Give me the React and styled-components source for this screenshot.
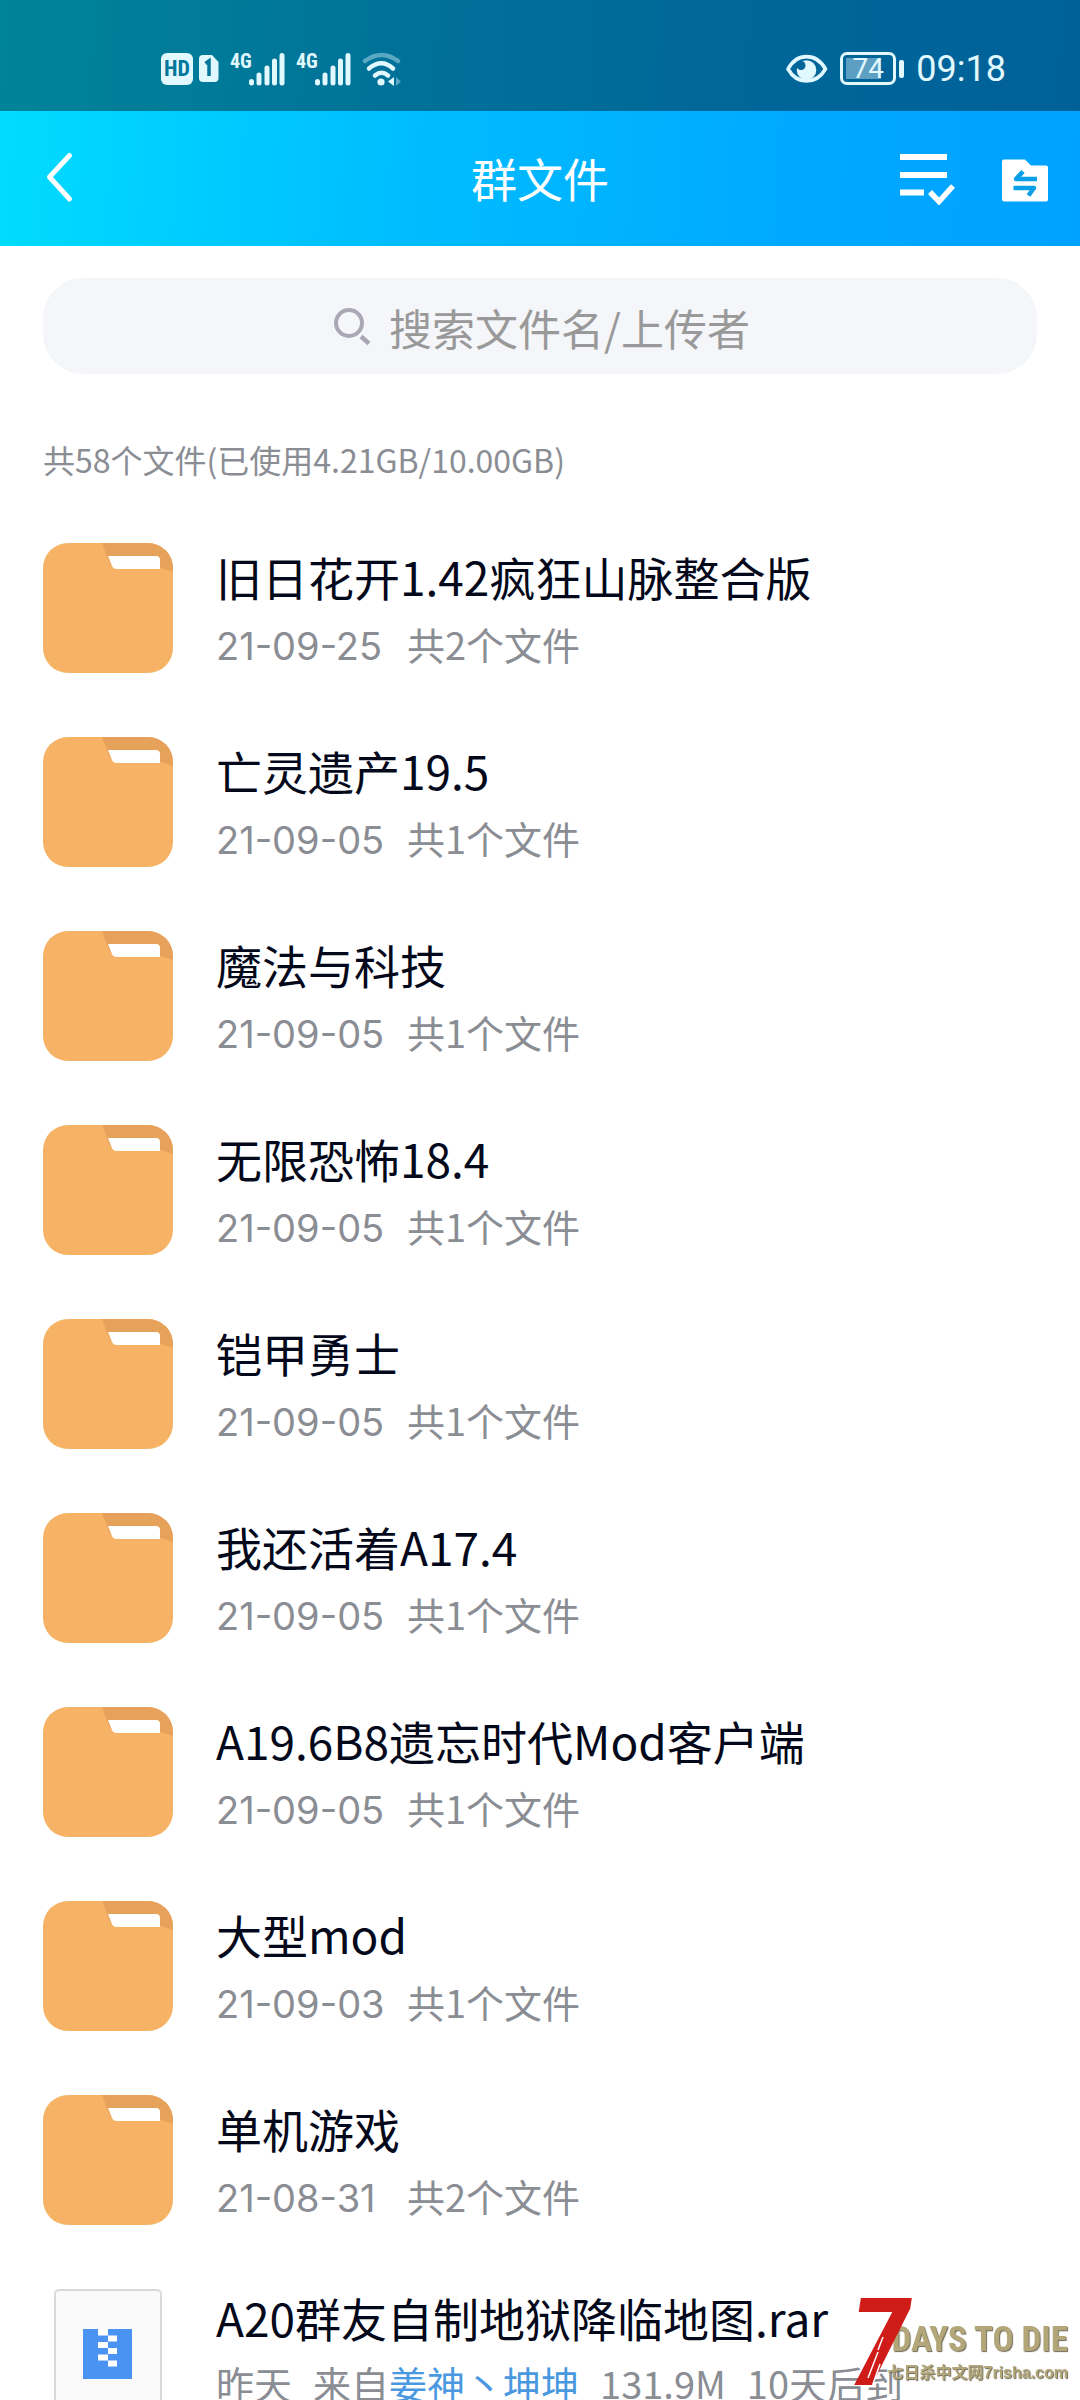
import React from "react";
import styled, { createGlobalStyle } from "styled-components";

const cjk = '"Noto Sans CJK SC", sans-serif';
const condensed = '"Liberation Sans Narrow", "Roboto Condensed", Roboto, sans-serif';

const Global = createGlobalStyle`
  *, *::before, *::after { box-sizing: border-box; }
  body { margin: 0; background: #fff; font-family: ${cjk}; }
  button { border: 0; padding: 0; background: none; color: inherit; font: inherit; cursor: pointer; }
  svg { display: block; }
  a { color: inherit; text-decoration: none; }
`;

const Screen = styled.div`
  display: flex;
  flex-direction: column;
  height: 100vh;
  overflow: hidden;
  background: #fff;
`;

const Top = styled.header`
  flex: none;
  color: #fff;
  background: linear-gradient(94deg, #00dcff 0%, #00beff 36%, #00a8ff 75%, #00a2ff 100%);
`;

const StatusBar = styled.div`
  display: flex;
  align-items: center;
  justify-content: space-between;
  height: 111px;
  padding: 26px 74px 0 161px;
  background: rgba(0, 0, 0, 0.4);
  color: #e2f8ff;
`;

const StatusGroup = styled.div`
  display: flex;
  align-items: center;
  gap: ${(p) => p.$gap}px;
`;

const Badge = styled.span`
  display: grid;
  place-items: center;
  width: 32px;
  height: 32px;
  border-radius: 6px;
  background: #e2f8ff;
  color: #00769b;
  font: 700 22px/32px ${condensed};
`;

const Signal = styled.span`
  display: flex;
  align-items: flex-start;
  height: 34px;
`;

const Network = styled.span`
  width: 19px;
  font: 700 20px/18px ${condensed};
`;

const Clock = styled.time`
  font: 400 36px/44px Roboto, sans-serif;
`;

const Battery = styled.span`
  display: flex;
  align-items: center;
  gap: 3px;
  &::after {
    content: "";
    width: 5px;
    height: 18px;
    border-radius: 2px;
    background: #e2f8ff;
  }
`;

const BatteryBody = styled.span`
  display: grid;
  width: 56px;
  height: 33px;
  padding: 3px;
  border: 3px solid #e2f8ff;
  border-radius: 7px;
  font: 400 28px/21px Roboto, sans-serif;
  text-align: center;
  background: linear-gradient(#5c9fc2, #5c9fc2) 3px 3px / 35px 21px no-repeat;
`;

const NavBar = styled.div`
  display: grid;
  grid-template-columns: 1fr auto 1fr;
  align-items: center;
  height: 135px;
  padding: 0 32px;
`;

const NavTitle = styled.h1`
  margin: 0;
  padding-bottom: 4px;
  font-size: 46px;
  font-weight: 400;
  line-height: 64px;
`;

const NavActions = styled.div`
  display: flex;
  justify-content: flex-end;
  gap: 44px;
`;

const Main = styled.main`
  flex: 1;
  min-height: 0;
  overflow: hidden;
  padding: 32px 43px 0;
`;

const SearchBox = styled.label`
  display: flex;
  align-items: center;
  justify-content: center;
  gap: 18px;
  height: 96px;
  padding: 2px 0 0 4px;
  border-radius: 40px;
  background: #f4f6fa;
`;

const SearchInput = styled.input`
  field-sizing: content;
  border: 0;
  padding: 0;
  outline: 0;
  background: none;
  color: #333;
  font: 400 43px/64px ${cjk};
  &::placeholder { color: #999; opacity: 1; }
`;

const Summary = styled.p`
  margin: 61px 0 60px;
  color: #8a8d93;
  font-size: 32px;
  line-height: 48px;
`;

const FileList = styled.ul`
  display: flex;
  flex-direction: column;
  gap: 64px;
  margin: 0;
  padding: 0;
  list-style: none;
`;

const Row = styled.li`
  display: flex;
  gap: 43px;
  min-height: 130px;
`;

const IconCell = styled.div`
  flex: none;
  display: flex;
  justify-content: center;
  width: 130px;
`;

const RowText = styled.div`
  display: flex;
  flex-direction: column;
  gap: ${(p) => (p.$file ? 14 : 16)}px;
  min-width: 0;
  padding-top: ${(p) => (p.$file ? 0 : 5)}px;
  white-space: nowrap;
`;

const RowTitle = styled.a`
  color: #03081a;
  font-size: 46px;
  line-height: 56px;
`;

const Meta = styled.div`
  display: flex;
  align-items: baseline;
  gap: 21px;
  color: #8a8d93;
  font-size: 38px;
  line-height: 48px;
`;

const DateText = styled.time`
  min-width: 170px;
  font-family: Inter, ${cjk};
`;

const Uploader = styled.a`
  color: #4a98e0;
`;

const Watermark = styled.aside`
  position: fixed;
  right: 12px;
  bottom: 0;
  display: flex;
  width: 214px;
  height: 112px;
`;

const Seven = styled.span`
  position: absolute;
  left: -5px;
  top: 0;
  color: #cf1c18;
  font: italic 700 122px/112px ${condensed};
`;

const Scratches = styled.svg`
  position: absolute;
  left: 0;
  top: 0;
`;

const MarkText = styled.div`
  flex: 1;
  display: flex;
  flex-direction: column;
  align-items: flex-end;
  padding-top: 29px;
  color: #b3a678;
  text-shadow: 1px 1px 1px #6f6a58;
  white-space: nowrap;
`;

const MarkName = styled.span`
  font: 700 35px/46px ${condensed};
`;

const MarkSite = styled.span`
  font: 700 16px/20px "Liberation Sans", ${cjk};
`;

const SignalBars = () => (
  <svg width="36" height="34" viewBox="0 0 36 34" stroke="currentColor" strokeWidth="5" strokeLinecap="round">
    <path d="M2.5 29.5v1.5M10 23v8M18 16v15M25.500 9v22M33 3.500v27.500" />
  </svg>
);

const Wifi = () => (
  <svg width="40" height="34" viewBox="0 0 40 34" fill="none" stroke="currentColor" strokeWidth="4.500" strokeLinecap="round">
    <path d="M3 9Q19.500-3 36 9" opacity=".4" />
    <path d="M7 16.500Q19.500 6 31 16.500M13 23.500Q19.500 18 26 23.500" />
    <circle cx="19" cy="30" r="3.600" fill="currentColor" stroke="none" />
    <path d="M32 25v9l-6-4.500z" fill="currentColor" stroke="none" />
    <path d="M34 25v9l5-4.500z" fill="currentColor" stroke="none" opacity=".4" />
  </svg>
);

const Sim = () => (
  <svg width="20" height="27" viewBox="0 0 20 27">
    <path d="M4 0h9l6.500 7v16a4 4 0 0 1-4 4H4a4 4 0 0 1-4-4V4a4 4 0 0 1 4-4z" fill="currentColor" />
    <path d="M6.500 8.500l3.500-2.500v15" fill="none" stroke="#00769b" strokeWidth="3.500" />
  </svg>
);

const Eye = () => (
  <svg width="42" height="30" viewBox="0 0 42 30">
    <path d="M2 15C11-1.500 30-1.500 39.500 15C30 31 11 31 2 15z" fill="none" stroke="currentColor" strokeWidth="3.600" strokeLinejoin="round" />
    <circle cx="20.500" cy="16" r="9.800" fill="currentColor" />
    <circle cx="15" cy="11.500" r="4.500" fill="#00659a" />
  </svg>
);

const Back = () => (
  <svg width="48" height="64" viewBox="-8 0 48 64" fill="none" stroke="#fff" strokeWidth="5" strokeLinecap="round" strokeLinejoin="round">
    <path d="M29.500 11.500L9.500 33l20 22" />
  </svg>
);

const SelectIcon = () => (
  <svg width="58" height="52" viewBox="0 0 58 52" fill="none" stroke="#fff" strokeWidth="6" strokeLinejoin="round">
    <path d="M0 4h47M0 22h47M0 39.500h24" />
    <path d="M30 39l9 9.500L53 33" strokeLinejoin="miter" strokeWidth="5.500" />
  </svg>
);

const TransferIcon = () => (
  <svg width="46" height="52" viewBox="0 0 46 52">
    <path d="M2 6.500h21l6 6h15a2 2 0 0 1 2 2v32a2 2 0 0 1-2 2H2a2 2 0 0 1-2-2v-38a2 2 0 0 1 2-2z" fill="#fff" />
    <path d="M35 26H14l7-7.500M11.500 35H32l-5.500 7.500" fill="none" stroke="#0a9fe6" strokeWidth="4.500" strokeLinejoin="round" />
  </svg>
);

const SearchIcon = () => (
  <svg width="37" height="38" viewBox="0 0 37 38" fill="none" stroke="#a9a8b4" strokeWidth="4">
    <circle cx="15" cy="15" r="13" />
    <path d="M27 28.500l8 7" strokeWidth="4.500" />
  </svg>
);

const FolderIcon = () => (
  <svg width="130" height="130" viewBox="0 0 130 130" aria-hidden="true">
    <rect width="130" height="130" rx="25" fill="#f7b365" />
    <path d="M59 0h46a25 25 0 0 1 25 25v4l-12-4H72q-5-3-7-9z" fill="#e6a25b" />
    <path d="M65 13h48q4 0 4 4v9H74q-4 0-5-3z" fill="#fff" />
  </svg>
);

const ArchiveIcon = () => (
  <svg width="108" height="130" viewBox="0 0 108 130" aria-hidden="true">
    <rect x="1" y="1" width="106" height="128" rx="4" fill="#fafafa" stroke="#d9d9d9" strokeWidth="2" />
    <path d="M29 40h49v50H29z" fill="#4a93f2" />
    <path d="M44 40h10v6.500h9v6h-9v6.500h9v6h-9v6.500h9v6h-9v-6h-10v-6h10v-6.500h-10v-6h10v-6.500H44z" fill="#fff" />
  </svg>
);

const folders = [
  ["旧日花开1.42疯狂山脉整合版", "21-09-25", 2],
  ["亡灵遗产19.5", "21-09-05", 1],
  ["魔法与科技", "21-09-05", 1],
  ["无限恐怖18.4", "21-09-05", 1],
  ["铠甲勇士", "21-09-05", 1],
  ["我还活着A17.4", "21-09-05", 1],
  ["A19.6B8遗忘时代Mod客户端", "21-09-05", 1],
  ["大型mod", "21-09-03", 1],
  ["单机游戏", "21-08-31", 2],
];

export default function App() {
  return (
    <Screen>
      <Global />
      <Top>
        <StatusBar>
          <StatusGroup $gap={11}>
            <StatusGroup $gap={6}>
              <Badge>HD</Badge>
              <Sim />
            </StatusGroup>
            <Signal><Network>4G</Network><SignalBars /></Signal>
            <Signal><Network>4G</Network><SignalBars /></Signal>
            <Wifi />
          </StatusGroup>
          <StatusGroup $gap={12}>
            <Eye />
            <Battery><BatteryBody>74</BatteryBody></Battery>
            <Clock>09:18</Clock>
          </StatusGroup>
        </StatusBar>
        <NavBar>
          <div><button type="button" aria-label="返回"><Back /></button></div>
          <NavTitle>群文件</NavTitle>
          <NavActions>
            <button type="button" aria-label="多选"><SelectIcon /></button>
            <button type="button" aria-label="传输列表"><TransferIcon /></button>
          </NavActions>
        </NavBar>
      </Top>
      <Main>
        <SearchBox>
          <SearchIcon />
          <SearchInput type="text" aria-label="搜索" placeholder="搜索文件名/上传者" />
        </SearchBox>
        <Summary>共58个文件(已使用4.21GB/10.00GB)</Summary>
        <FileList>
          {folders.map(([name, date, count]) => (
            <Row key={name}>
              <IconCell><FolderIcon /></IconCell>
              <RowText>
                <RowTitle href="#folder">{name}</RowTitle>
                <Meta>
                  <DateText>{date}</DateText>
                  <span>共{count}个文件</span>
                </Meta>
              </RowText>
            </Row>
          ))}
          <Row>
            <IconCell><ArchiveIcon /></IconCell>
            <RowText $file>
              <RowTitle href="#file">A20群友自制地狱降临地图.rar</RowTitle>
              <Meta>
                <span>昨天</span>
                <span>来自<Uploader href="#uploader">姜神丶坤坤</Uploader></span>
                <span>131.9M</span>
                <span>10天后到</span>
              </Meta>
            </RowText>
          </Row>
        </FileList>
      </Main>
      <Watermark>
        <MarkText>
          <MarkName>DAYS TO DIE</MarkName>
          <MarkSite>七日杀中文网7risha.com</MarkSite>
        </MarkText>
        <Seven>7</Seven>
        <Scratches width="70" height="112" viewBox="0 0 70 112" stroke="#fff" fill="none" strokeWidth="1.500">
          <path d="M14 90l10-26M19 96l7-20M24 62l5-13" />
        </Scratches>
      </Watermark>
    </Screen>
  );
}
